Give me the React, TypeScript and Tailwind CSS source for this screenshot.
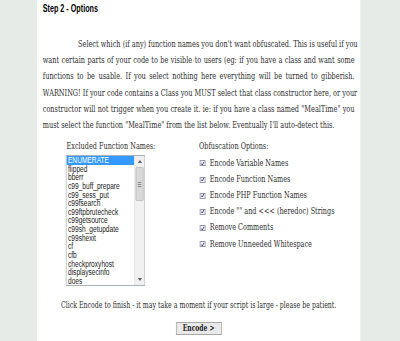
const names = [
  "ENUMERATE",
  "flipped",
  "bberr",
  "c99_buff_prepare",
  "c99_sess_put",
  "c99fsearch",
  "c99ftpbrutecheck",
  "c99getsource",
  "c99sh_getupdate",
  "c99shexit",
  "cf",
  "cfb",
  "checkproxyhost",
  "displaysecinfo",
  "does",
];

const options = [
  "Encode Variable Names",
  "Encode Function Names",
  "Encode PHP Function Names",
  'Encode "" and <<< (heredoc) Strings',
  "Remove Comments",
  "Remove Unneeded Whitespace",
];

// the screenshot is squeezed sideways, so the panel is laid out wide and scaled on x
const lines = [
  "Select which (if any) function names you don't want obfuscated. This is useful if you",
  "want certain parts of your code to be visible to users (eg: if you have a class and want some",
  "functions to be usable. If you select nothing here everything will be turned to gibberish.",
  "WARNING! If your code contains a Class you MUST select that class constructor here, or your",
  'constructor will not trigger when you create it. ie: if you have a class named "MealTime" you',
];

function Check() {
  return (
    <span className="flex h-[6px] w-[8px] shrink-0 items-center justify-center border border-[#8f9aa6] bg-[#eef1f4]">
      <svg viewBox="0 0 8 6" className="h-[5px] w-[7px]" preserveAspectRatio="none">
        <path d="M1.4 3 L3.4 4.8 L6.8 0.8" fill="none" stroke="#2a3b5c" strokeWidth="1.2" />
      </svg>
    </span>
  );
}

function ListBox() {
  return (
    <div className="flex h-[131px] w-[110px] border border-[#a9b1ba] bg-white font-['Liberation_Sans',Arial,sans-serif] text-[9.2px] leading-[8.62px] text-[#222]">
      <div className="flex-1 overflow-hidden">
        {names.map((n, i) => (
          <div
            key={n}
            className={i === 0 ? "h-[8.62px] bg-[#3399ff] pl-[2px] text-white" : "h-[8.62px] pl-[2px]"}
          >
            {n}
          </div>
        ))}
      </div>
      <div className="flex w-[14px] flex-col border-l border-[#e6e6e6] bg-[#f0f0f0]">
        <div className="flex h-[11px] items-center justify-center">
          <svg viewBox="0 0 6 3" className="h-[3px] w-[6px]">
            <path d="M0 3 L3 0 L6 3Z" fill="#606060" />
          </svg>
        </div>
        <div className="mx-[1px] flex h-[34px] items-center justify-center rounded-[1px] border border-[#bdbdbd] bg-[#d9d9d9]">
          <div className="flex flex-col gap-[1px]">
            <div className="h-px w-[5px] bg-[#8a8a8a]" />
            <div className="h-px w-[5px] bg-[#8a8a8a]" />
            <div className="h-px w-[5px] bg-[#8a8a8a]" />
          </div>
        </div>
        <div className="flex-1" />
        <div className="flex h-[11px] items-center justify-center">
          <svg viewBox="0 0 6 3" className="h-[3px] w-[6px]">
            <path d="M0 0 L3 3 L6 0Z" fill="#606060" />
          </svg>
        </div>
      </div>
    </div>
  );
}

export default function App() {
  return (
    <div className="h-[341px] w-[400px] overflow-hidden bg-[#e6ebe7]">
      <div className="ml-[37px] h-[341px] w-[449px] origin-top-left scale-x-[0.72] bg-white px-[8px] pt-[3px]">
        <h2 className="font-['Liberation_Sans',Arial,sans-serif] text-[10px] font-bold leading-[12px] text-black">
          Step 2 - Options
        </h2>
        <div className="mt-[21px] font-['DejaVu_Serif',Georgia,serif] text-[9.1px] leading-[16.2px] text-[#2e2e2e]">
          {lines.map((l, i) => (
            <div
              key={i}
              className={
                i === 0
                  ? "whitespace-nowrap pl-[49px] text-justify [text-align-last:justify]"
                  : "whitespace-nowrap text-justify [text-align-last:justify]"
              }
            >
              {l}
            </div>
          ))}
          <div className="whitespace-nowrap">
            must select the function "MealTime" from the list below. Eventually I'll auto-detect this.
          </div>
        </div>
        <div className="mt-[8px] flex font-['DejaVu_Serif',Georgia,serif] text-[9px] text-[#2e2e2e]">
          <div className="ml-[32px] w-[185px]">
            <div className="pl-[1px] leading-[10px]">Excluded Function Names:</div>
            <div className="mt-[4px]">
              <ListBox />
            </div>
          </div>
          <div>
            <div className="leading-[10px]">Obfuscation Options:</div>
            <div className="mt-[4px] flex flex-col">
              {options.map((o) => (
                <div key={o} className="flex h-[16.2px] items-center gap-[6px] pl-[1px]">
                  <Check />
                  <span>{o}</span>
                </div>
              ))}
            </div>
          </div>
        </div>
        <div className="mt-[13px] text-center font-['DejaVu_Serif',Georgia,serif] text-[8.7px] leading-[12px] text-[#2e2e2e]">
          Click Encode to finish - it may take a moment if your script is large - please be patient.
        </div>
        <div className="mt-[11px] flex justify-center">
          <button className="h-[13px] w-[64px] border border-[#a8a8a8] bg-[#e9e9e9] font-['DejaVu_Serif',Georgia,serif] text-[8.4px] font-bold leading-[11px] text-[#222]">
            Encode &gt;
          </button>
        </div>
      </div>
    </div>
  );
}
